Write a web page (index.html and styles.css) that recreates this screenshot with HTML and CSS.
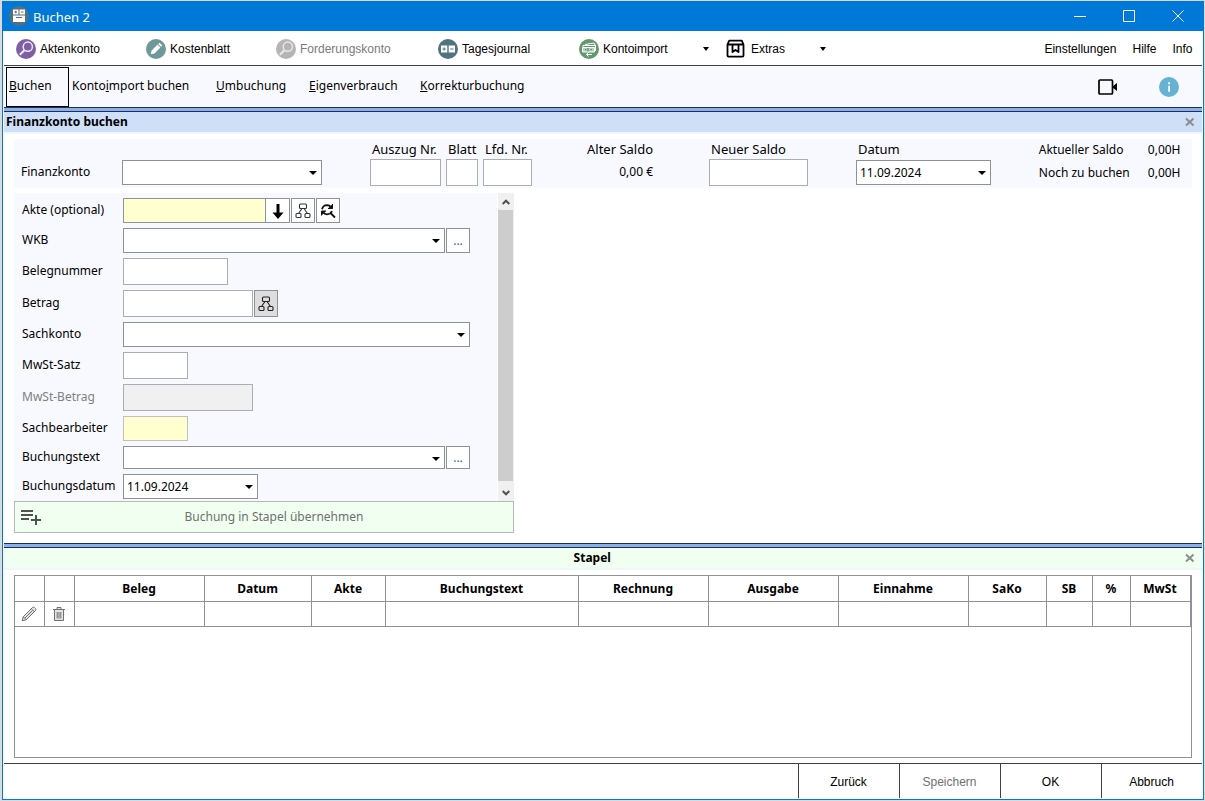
FILE: index.html
```html
<!DOCTYPE html>
<html lang="de">
<head>
<meta charset="utf-8">
<title>Buchen 2</title>
<link rel="stylesheet" href="styles.css">
</head>
<body>
<div class="window">
  <header class="titlebar">
    <svg class="app-icon" viewBox="0 0 20 20"><circle cx="10" cy="10" r="10" fill="#55707a"/><path d="M4 3.500h5.500v5H4zM10.500 3.500H16v5h-5.500zM4 9.500h12v6.500H4z" fill="#fff"/><path d="M5.500 6h2.500M6.750 4.700v2.600M12 6h2.500M7 11.500h6" stroke="#55707a" fill="none"/></svg>
    <h1 class="title">Buchen 2</h1>
    <div class="window-buttons">
      <button type="button" aria-label="Minimieren"><svg viewBox="0 0 12 12"><path d="M0 6.500h12"/></svg></button>
      <button type="button" aria-label="Maximieren"><svg viewBox="0 0 12 12"><path d="M.5.500h11v11H.5z"/></svg></button>
      <button type="button" aria-label="Schließen"><svg viewBox="0 0 12 12"><path d="M.5.500l11 11M11.500.500l-11 11"/></svg></button>
    </div>
  </header>

  <div class="body">
    <div class="toolbar">
      <button type="button" class="tool"><svg viewBox="0 0 20 20"><circle cx="10" cy="10" r="10" fill="#7f5fa3"/><g fill="none" stroke="#efe8f5"><circle cx="11.800" cy="7.700" r="4.600" stroke-width="1.500"/><path d="M8.400 11.200l-4.600 4.600" stroke-width="2"/></g></svg>Aktenkonto</button>
      <button type="button" class="tool"><svg viewBox="0 0 20 20"><circle cx="10" cy="10" r="10" fill="#6f9899"/><path d="M4.800 15.200l.8-3.600 6-6 2.800 2.800-6 6zM12.300 4.900l1.200-1.200 2.800 2.800-1.200 1.200z" fill="#fff"/></svg>Kostenblatt</button>
      <button type="button" class="tool wide" disabled><svg viewBox="0 0 20 20"><circle cx="10" cy="10" r="10" fill="#b5b5b5"/><g fill="none" stroke="#e8e8e8"><circle cx="11.800" cy="7.700" r="4.600" stroke-width="1.500"/><path d="M8.400 11.200l-4.600 4.600" stroke-width="2"/></g></svg>Forderungskonto</button>
      <button type="button" class="tool mid"><svg viewBox="0 0 20 20"><circle cx="10" cy="10" r="10" fill="#4f7480"/><path d="M3 6.500h6.300v7H3zM10.700 6.500H17v7h-6.300z" fill="#fff"/><path d="M4.500 10h3.300M6.150 8.400v3.200M12.200 10h3.300" stroke="#4f7480" fill="none"/></svg>Tagesjournal</button>
      <button type="button" class="tool drop"><svg viewBox="0 0 20 20"><circle cx="10" cy="10" r="10" fill="#62986e"/><g fill="none" stroke="#fff"><path d="M6 5.500l9-1.500 1.500 2.500M4 8V6.500h12.500V12M7.500 15.500H13M9.500 13.500l-2 2 2 2"/><path d="M3.500 8.500h12v4.500h-12z" fill="#fff" fill-opacity=".55"/></g><path d="M6 10.800h1.500M9 9v3.500M11.500 10.800H13" stroke="#3f7a50" fill="none"/></svg>Kontoimport<span class="caret"></span></button>
      <button type="button" class="tool drop extras"><svg viewBox="0 0 20 20" fill="none" stroke="#000" stroke-width="1.800"><path d="M1.500 5.500v11.100q0 1 1 1h14q1 0 1-1V5.500zM1.500 5.500L3.200 1.700h12.600L17.500 5.500M6.500 5.500v7.500l3-2 3 2v-7.500" stroke-linejoin="round"/></svg>Extras<span class="caret"></span></button>
      <nav class="links"><a href="#">Einstellungen</a><a href="#">Hilfe</a><a href="#">Info</a></nav>
    </div>

    <div class="tabs">
      <button type="button" class="tab active"><u>B</u>uchen</button>
      <button type="button" class="tab t-import"><span>Konto<u>i</u>mport buchen</span></button>
      <button type="button" class="tab t-um"><span><u>U</u>mbuchung</span></button>
      <button type="button" class="tab t-eigen"><span><u>E</u>igenverbrauch</span></button>
      <button type="button" class="tab"><span><u>K</u>orrekturbuchung</span></button>
      <div class="help">
        <button type="button" aria-label="Video"><svg class="video" viewBox="0 0 20 16"><rect x="1" y="1" width="13.500" height="14" rx="1" fill="none" stroke="#000" stroke-width="1.700"/><path d="M14.500 7.500L19 4v8l-4.500-3.500z" fill="#000"/></svg></button>
        <button type="button" aria-label="Information"><svg class="info" viewBox="0 0 20 20"><circle cx="10" cy="10" r="10" fill="#66b2d3"/><path d="M9.200 5.200h1.800v2H9.200zM9.200 8.800h1.800v6H9.200z" fill="#fff"/></svg></button>
      </div>
    </div>

    <div class="splitter"></div>
    <div class="section-head blue"><h2>Finanzkonto buchen</h2><button type="button" class="close" aria-label="Bereich schließen"><svg viewBox="0 0 10 10"><path d="M1 1.500l7.500 7M8.500 1.500l-7.500 7"/></svg></button></div>

    <section class="booking">
      <div class="account">
        <label class="account-label" for="fk">Finanzkonto</label>
        <div class="control account-select"><span class="select"><select id="fk"><option></option></select></span></div>
        <div class="field auszug"><label for="az">Auszug Nr.</label><input id="az" type="text"></div>
        <div class="field blatt"><label for="bl">Blatt</label><input id="bl" type="text"></div>
        <div class="field lfd"><label for="ln">Lfd. Nr.</label><input id="ln" type="text"></div>
        <div class="field alter"><span class="caption">Alter Saldo</span><output>0,00 €</output></div>
        <div class="field neuer"><label for="ns">Neuer Saldo</label><input id="ns" type="text"></div>
        <div class="field datum"><label for="dt">Datum</label><div class="control"><span class="select"><select id="dt"><option>11.09.2024</option></select></span></div></div>
        <dl class="totals"><dt>Aktueller Saldo</dt><dd>0,00H</dd><dt>Noch zu buchen</dt><dd>0,00H</dd></dl>
      </div>

      <form class="entry">
        <div class="scroll">
          <div class="rows">
            <div class="row"><label for="akte">Akte (optional)</label><input id="akte" class="w-akte low yellow dark" type="text"><button type="button" class="icon-btn flush" aria-label="Akte übernehmen"><svg viewBox="0 0 16 16"><path d="M8 1v10" stroke="#000" stroke-width="3"/><path d="M2.500 9.500h11L8 16z"/></svg></button><button type="button" class="icon-btn" aria-label="Baum"><svg viewBox="0 0 16 16" fill="none" stroke="#333" stroke-width="1.100"><rect x="4.500" y="1" width="7" height="4.500" rx="1"/><rect x="1" y="10.500" width="5" height="4" rx="1"/><rect x="10" y="10.500" width="5" height="4" rx="1"/><path d="M7 5.500l-3.500 5M9 5.500l3.500 5"/></svg></button><button type="button" class="icon-btn" aria-label="Suchen"><svg viewBox="0 0 16 16" fill="none" stroke="#111" stroke-width="1.800"><path d="M2 6.200Q3 2.300 7 2.200q2.600 0 4 2M12 8q-1.300 3.200-5 3.300-2.600 0-4-2M10 9.500l5 5"/><path d="M12.500 1v4.500H8M1.500 12.500V8H6" fill="#111" stroke-width="1"/></svg></button></div>
            <div class="row"><label for="wkb">WKB</label><span class="select w-combo low"><select id="wkb"><option></option></select></span><button type="button" class="icon-btn dots">...</button></div>
            <div class="row"><label for="beleg">Belegnummer</label><input id="beleg" class="w-beleg" type="text"></div>
            <div class="row"><label for="betrag">Betrag</label><input id="betrag" class="w-betrag" type="text"><button type="button" class="icon-btn tall gray" aria-label="Aufteilen"><svg viewBox="0 0 16 16" fill="none" stroke="#222" stroke-width="1.100"><rect x="4.500" y="1" width="7" height="4.500" rx="1"/><rect x="1" y="10.500" width="5" height="4" rx="1"/><rect x="10" y="10.500" width="5" height="4" rx="1"/><path d="M7 5.500l-3.500 5M9 5.500l3.500 5"/></svg></button></div>
            <div class="row"><label for="sach">Sachkonto</label><span class="select w-full low"><select id="sach"><option></option></select></span></div>
            <div class="row"><label for="satz">MwSt-Satz</label><input id="satz" class="w-small" type="text"></div>
            <div class="row muted"><label for="mb">MwSt-Betrag</label><input id="mb" class="w-betrag" type="text" disabled></div>
            <div class="row"><label for="sb">Sachbearbeiter</label><input id="sb" class="w-small low yellow" type="text"></div>
            <div class="row"><label for="bt">Buchungstext</label><span class="select w-combo flat"><select id="bt"><option></option></select></span><button type="button" class="icon-btn flat dots">...</button></div>
            <div class="row"><label for="bd">Buchungsdatum</label><span class="select w-date low"><select id="bd"><option>11.09.2024</option></select></span></div>
          </div>
          <div class="scrollbar" aria-hidden="true">
            <svg viewBox="0 0 8 6"><path d="M.7 5L4 1.700 7.300 5"/></svg>
            <div class="thumb"></div>
            <svg class="down" viewBox="0 0 8 6"><path d="M.7 1L4 4.300 7.300 1"/></svg>
          </div>
        </div>
        <button type="submit" class="commit" disabled><svg viewBox="0 0 20 16"><path d="M0 2h12M0 6h12M0 10h8M10 11h10M15 6v10"/></svg><span>Buchung in Stapel übernehmen</span></button>
      </form>
    </section>

    <div class="splitter"></div>
    <div class="section-head green"><h2>Stapel</h2><button type="button" class="close" aria-label="Stapel schließen"><svg viewBox="0 0 10 10"><path d="M1 1.500l7.500 7M8.500 1.500l-7.500 7"/></svg></button></div>

    <section class="stack">
      <table>
        <colgroup><col class="c29"><col class="c30"><col class="c130"><col class="c107"><col class="c74"><col class="c193"><col class="c130"><col class="c130"><col class="c130"><col class="c78"><col class="c46"><col class="c38"><col class="c60"></colgroup>
        <thead><tr><th></th><th></th><th>Beleg</th><th>Datum</th><th>Akte</th><th>Buchungstext</th><th>Rechnung</th><th>Ausgabe</th><th>Einnahme</th><th>SaKo</th><th>SB</th><th>%</th><th>MwSt</th></tr></thead>
        <tbody><tr>
          <td><button type="button" aria-label="Bearbeiten"><svg viewBox="0 0 16 16"><path d="M1.200 14.800l1-4L11.500 1.500q1-.8 2 0l1 1q.8 1 0 2L5.200 13.800zM10.300 2.700l3 3M2.200 10.800l3 3M4 12l7.500-7.500"/></svg></button></td>
          <td><button type="button" aria-label="Löschen"><svg viewBox="0 0 16 16"><path d="M2 3.500h12M6 3V1.500h4V3M3.500 4v10.500h9V4M6.200 6v6.500M8 6v6.500M9.800 6v6.500"/></svg></button></td>
          <td></td><td></td><td></td><td></td><td></td><td></td><td></td><td></td><td></td><td></td><td></td>
        </tr></tbody>
      </table>
    </section>

    <footer class="actions">
      <button type="button">Zurück</button><button type="button" disabled>Speichern</button><button type="button">OK</button><button type="button">Abbruch</button>
    </footer>
  </div>
</div>
</body>
</html>
```

FILE: styles.css
```css
* { box-sizing: border-box; }

body {
  margin: 0;
  min-height: 100vh;
  padding: 1px 2px 1px 2px;
  display: flex;
  background: #d9dadc;
  color: #000;
  font: 12px/20px "Noto Sans", "Open Sans", sans-serif;
}

button, input, select { font: inherit; color: inherit; margin: 0; }
button { padding: 0; border: 0; background: none; }
svg { display: block; flex: none; }
h1, h2, dl, dd { margin: 0; }

.window {
  flex: 1;
  display: flex;
  flex-direction: column;
  background: #fff;
  border: 1px solid #0078d7;
  border-top: 0;
}

.titlebar {
  display: flex;
  align-items: center;
  height: 30px;
  padding-left: 6px;
  background: #0078d7;
  color: #fff;
}
.app-icon { width: 20px; height: 20px; }
.title { margin-left: 4px; padding-top: 2px; font-size: 13px; font-weight: 400; }
.window-buttons { display: flex; margin-left: auto; }
.window-buttons button { width: 49px; height: 30px; display: grid; place-items: center; }
.window-buttons svg { width: 12px; height: 12px; fill: none; stroke: #fff; }

.body {
  flex: 1;
  display: flex;
  flex-direction: column;
  padding: 0 1px 1px;
}

.toolbar {
  display: flex;
  align-items: center;
  height: 35px;
  padding: 2px 9px 0 12px;
  border-bottom: 1px solid #404040;
  font-family: "Liberation Sans", Arial, sans-serif;
}
.tool { display: flex; align-items: center; gap: 4px; width: 130px; height: 32px; }
.tool svg { width: 20px; height: 20px; }
.tool:disabled { color: #7a7a7a; }
.tool.wide { width: 162px; }
.tool.mid { width: 141px; }
.tool.drop { width: 130px; }
.tool.extras { width: 100px; margin-left: 17px; gap: 5px; }
.caret, .select::after {
  border: 3px solid transparent;
  border-top: 4px solid #000;
  border-bottom: 0;
}
.caret { margin-left: auto; }
.links { display: flex; gap: 16px; margin-left: auto; }
.links a { color: inherit; text-decoration: none; }

.tabs {
  display: flex;
  height: 41px;
  padding: 1px 23px 0 2px;
  background: #f8f9ff;
}
.tab { padding: 0 3px 2px; text-align: left; white-space: nowrap; }
.tab.active { width: 63px; padding: 0 2px 2px; border: 1px solid #000; }
.t-import { width: 144px; }
.t-um { width: 93px; }
.t-eigen { width: 111px; }
.help { display: flex; align-items: center; gap: 41px; margin-left: auto; }
.video { width: 20px; height: 16px; }
.info { width: 20px; height: 20px; }

.splitter {
  height: 5px;
  background: #8db1e6;
  border: solid #1b2f5c;
  border-width: 1px 0;
}

.section-head {
  display: flex;
  align-items: center;
  height: 22px;
  padding: 0 7px 0 2px;
  border-bottom: 2px solid #eff6ff;
}
.section-head h2 { flex: 1; font-size: 12px; font-weight: 700; line-height: 20px; }
.section-head.blue { background: #cfdff8; }
.section-head.green { background: #f0fff0; text-align: center; }
.section-head.green h2 { padding-right: 6px; }
.close { width: 10px; height: 10px; }
.close svg { width: 10px; height: 10px; stroke: #8c8c8c; stroke-width: 2; fill: none; }

.booking { padding: 5px 10px 10px; }

.account {
  display: flex;
  align-items: flex-end;
  height: 49px;
  padding: 0 11px 2px 7px;
  background: #f8f9ff;
}
.account-label { width: 101px; padding-bottom: 2px; line-height: 25px; }
.account-select { width: 200px; }
.control { display: flex; align-items: center; height: 27px; }
.field { display: flex; flex-direction: column; }
.field label { padding-left: 2px; }
.field label, .caption { font-size: 13px; white-space: nowrap; }
.field output { padding-bottom: 2px; line-height: 25px; text-align: right; }
.auszug { width: 71px; margin-left: 48px; }
.blatt { width: 32px; margin-left: 5px; }
.lfd { width: 49px; margin-left: 5px; }
.alter { width: 66px; margin-left: 55px; }
.neuer { width: 99px; margin-left: 56px; }
.datum { width: 135px; margin-left: 48px; }
.totals {
  display: grid;
  grid-template-columns: auto auto;
  column-gap: 18px;
  margin: 0 0 2px auto;
  line-height: 23px;
  white-space: nowrap;
}

input {
  width: 100%;
  height: 27px;
  padding: 0 4px;
  border: 1px solid #abadb3;
  border-radius: 0;
  background: #fff;
}
input:disabled { background: #f0f0f0; }
.low, .low select { height: 25px; }
.flat, .flat select { height: 23px; }
.yellow { background: #ffffcf; border-color: #c0c0c0; }
.dark { border-color: #8c949c; }

.select { position: relative; display: block; width: 100%; }
.select select {
  display: block;
  width: 100%;
  height: 25px;
  padding: 0 20px 0 3px;
  border: 1px solid #8c9298;
  border-radius: 0;
  background: #fff;
  appearance: none;
}
.select.flat select { height: 23px; }
.select::after {
  content: "";
  position: absolute;
  right: 5px;
  top: 11px;
  border-width: 4px 4px 0;
}

.entry { width: 500px; margin-top: 5px; }
.scroll { display: flex; }
.rows {
  flex: 1;
  display: flex;
  flex-direction: column;
  gap: 5px;
  padding: 5px 8px 2px;
  background: #f8f9ff;
}
.row { display: flex; align-items: center; }
.row label { width: 101px; flex: none; padding-bottom: 2px; white-space: nowrap; }
.muted label { color: #808080; }
.w-akte { width: 143px; }
.w-combo { width: 322px; }
.w-full { width: 347px; }
.w-beleg { width: 105px; }
.w-betrag { width: 130px; }
.w-small { width: 65px; }
.w-date { width: 135px; }

.icon-btn {
  display: grid;
  place-items: center;
  width: 24px;
  height: 25px;
  margin-left: 1px;
  border: 1px solid #8c9298;
  background: #fff;
}
.icon-btn svg { width: 16px; height: 16px; }
.icon-btn.flush { width: 25px; margin-left: -1px; }
.icon-btn.tall { height: 27px; }
.icon-btn.gray { background: #ddd; }
.icon-btn.flat { height: 23px; }
.dots { color: #1c6a9c; }

.scrollbar {
  display: flex;
  flex-direction: column;
  align-items: center;
  width: 17px;
  border-left: 1px solid #fff;
  background: #f0f0f0;
}
.scrollbar svg { width: 8px; height: 6px; margin: 6px 0 5px; fill: none; stroke: #505050; stroke-width: 2; }
.scrollbar .down { margin: 9px 0 5px; }
.thumb { flex: 1; width: 15px; align-self: flex-start; background: #cdcdcd; }

.commit {
  display: flex;
  align-items: center;
  width: 100%;
  height: 32px;
  padding: 0 6px;
  border: 1px solid #b4bab4;
  background: #f0fff0;
  color: #707070;
}
.commit svg { width: 20px; height: 16px; fill: none; stroke: #505050; stroke-width: 2; }
.commit span { flex: 1; }

.stack {
  flex: 1;
  margin: 5px 10px;
  border: 1px solid #8c9298;
}
table {
  width: 100%;
  table-layout: fixed;
  border-collapse: collapse;
  margin-top: -1px;
}
th, td { height: 26px; padding: 0; border: 1px solid #8c9298; }
td { height: 25px; }
th { line-height: 20px; text-align: center; }
th:first-child, td:first-child { border-left-width: 0; }
td button { display: block; margin: 0 auto; }
td svg { width: 16px; height: 16px; fill: #e4e4e4; stroke: #707070; }
.c29 { width: 29px; }
.c30 { width: 30px; }
.c38 { width: 38px; }
.c46 { width: 46px; }
.c60 { width: 60px; }
.c74 { width: 74px; }
.c78 { width: 78px; }
.c107 { width: 107px; }
.c130 { width: 130px; }
.c193 { width: 193px; }

.actions {
  display: flex;
  justify-content: flex-end;
  height: 35px;
  border-top: 1px solid #404040;
  font-family: "Liberation Sans", Arial, sans-serif;
}
.actions button { width: 101px; padding-top: 2px; border-left: 1px solid #404040; }
.actions button:disabled { color: #707070; }
```
